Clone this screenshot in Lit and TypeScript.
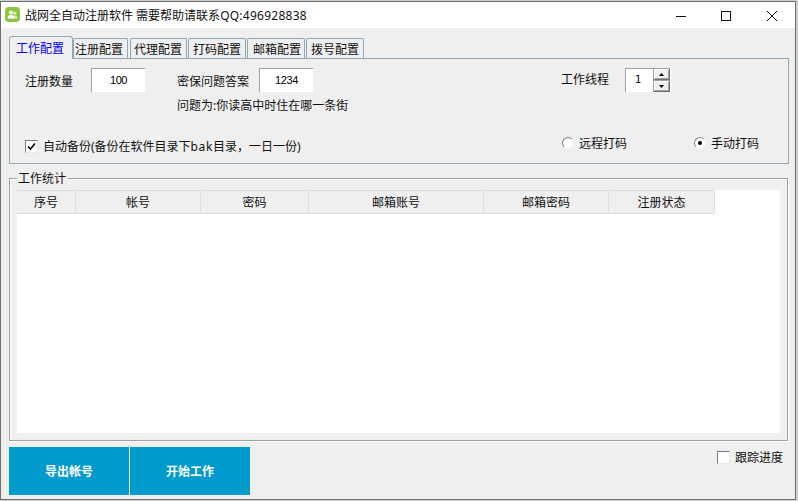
import { LitElement, html, css } from "lit";
import { customElement } from "lit/decorators.js";

@customElement("app-root")
export class AppRoot extends LitElement {
  static styles = css`
    :host { display: block; width: 798px; height: 501px; padding: 1px 2px 1px 0; box-sizing: border-box; background: #cfcfcf; font-family: "Noto Sans", "Noto Sans CJK SC", sans-serif; font-size: 12px; color: #111; }
    * { box-sizing: border-box; }
    .win { width: 796px; height: 499px; border: 1px solid #6e6e6e; background: #efefef; display: flex; flex-direction: column; }
    .title { height: 26px; background: #fff; display: flex; align-items: center; padding-left: 4px; flex: none; }
    .logo { width: 15px; height: 15px; margin-right: 5px; flex: none; margin-top: -1px; }
    .ttext { flex: 1; white-space: nowrap; margin-top: -1px; }
    .latin { letter-spacing: 0.25px; }
    .wbtns { display: flex; }
    .wbtn { width: 46px; height: 26px; padding-top: 2px; display: flex; align-items: center; justify-content: center; flex: none; }
    .wbtn.min { padding-left: 2px; }
    .body { flex: 1; padding: 8px 8px 4px 8px; display: flex; flex-direction: column; min-height: 0; }
    .tabs { display: flex; height: 22px; align-items: flex-end; position: relative; z-index: 1; flex: none; }
    .tab { height: 20px; border: 1px solid #8fa8b8; border-bottom: none; border-radius: 2px 2px 0 0; display: flex; align-items: center; white-space: nowrap; background: #efefef; flex: none; }
    .tab.on { height: 23px; color: #0000f0; margin-bottom: -1px; border-radius: 3px 3px 0 0; padding-bottom: 1px; }
    .panel { height: 106px; width: 780px; border: 1px solid #8fa8b8; padding: 9px 0 0 15px; flex: none; }
    .row1 { display: grid; grid-template-columns: 66px 86px 82px 302px 64px 1fr; align-items: center; height: 24px; }
    .drop { margin-top: 2px; }
    .lift { margin-top: -2px; }
    .q { margin: 0 0 0 152px; height: 26px; display: flex; align-items: center; }
    .row3 { display: grid; grid-template-columns: 537px 132px 1fr; margin-top: 13px; height: 20px; align-items: center; }
    .backup { margin-top: 6px; }
    .input { width: 54px; height: 24px; background: #fff; border-top: 1px solid #a0a0a0; border-left: 1px solid #a0a0a0; display: flex; align-items: center; justify-content: center; font-family: "Liberation Sans", sans-serif; font-size: 11px; letter-spacing: -0.4px; color: #000; padding-bottom: 2px; }
    .spin { display: flex; height: 24px; background: #fff; width: 46px; }
    .v { width: 28px; border-top: 1px solid #a0a0a0; border-left: 1px solid #a0a0a0; display: flex; align-items: center; justify-content: center; font-family: "DejaVu Sans Mono", monospace; font-size: 10px; color: #000; padding-bottom: 2px; padding-right: 3px; }
    .sb { width: 17px; display: flex; flex-direction: column; }
    .sbb { height: 12px; background: #efefef; border: 1px solid #a0a0a0; border-right-color: #707070; border-bottom-color: #707070; box-shadow: inset 1px 1px 0 #fff, inset -1px -1px 0 #a0a0a0; display: flex; align-items: center; justify-content: center; }
    .chk { display: flex; align-items: center; white-space: nowrap; }
    .box { width: 13px; height: 13px; flex: none; margin-right: 5px; background: #fff; border: 1px solid; border-color: #7a7a7a #e8e8e8 #e8e8e8 #7a7a7a; display: flex; align-items: center; justify-content: center; }
    .radio { width: 12px; height: 12px; flex: none; margin-right: 5px; border-radius: 50%; background: #fff; border: 1px solid; border-color: #808080 #f4f4f4 #f4f4f4 #808080; display: flex; align-items: center; justify-content: center; }
    .dot { width: 4px; height: 4px; background: #000; border-radius: 50%; }
    .bak { letter-spacing: 0.6px; }
    .group { margin-top: 14px; position: relative; height: 263px; width: 779px; border: 1px solid #a0a0a0; box-shadow: inset 1px 1px 0 #fff, 1px 1px 0 #fff; padding: 11px 7px 7px 7px; flex: none; }
    .legend { position: absolute; left: 7px; top: -9px; background: #efefef; padding: 0 2px 0 1px; height: 18px; line-height: 17px; }
    .table { height: 100%; background: #fff; }
    .thead { display: flex; height: 24px; width: 698px; }
    .th { background: #efefef; display: flex; align-items: center; justify-content: center; border: solid #dcdcdc; border-width: 1px 1px 1px 0; padding-bottom: 1px; }
    .foot { display: flex; margin-top: 6px; flex: none; }
    .btns { display: flex; gap: 1px; background: #fff; }
    .btn { height: 48px; width: 120px; background: #009acd; color: #fff; display: flex; align-items: center; justify-content: center; font-weight: 700; }
    .track { margin-left: auto; margin-right: 4px; align-self: flex-start; height: 20px; }
  `;

  render() {
    const tabs: [string, number, number, number][] = [
      ["工作配置", 64, 0, 6], ["注册配置", 55, 2, 1], ["代理配置", 57, 1, 3],
      ["打码配置", 58, 1, 4], ["邮箱配置", 58, 1, 5], ["拨号配置", 58, 0, 4],
    ];
    const cols: [string, number][] = [["序号", 59], ["帐号", 125], ["密码", 108], ["邮箱账号", 175], ["邮箱密码", 125], ["注册状态", 106]];
    return html`<div class="win">
      <div class="title">
        <svg class="logo" viewBox="0 0 15 15">
          <rect width="15" height="15" rx="4" fill="#8cc63f"/>
          <circle cx="9.800" cy="6.300" r="1.700" fill="#dcecc4"/><path d="M7.500 11.500c0-1.900 1-2.900 2.300-2.900s2.700 1 2.700 2.900z" fill="#dcecc4"/>
          <circle cx="6" cy="5.500" r="2.100" fill="#fff"/><path d="M2.500 11.500c0-2.400 1.500-3.400 3.500-3.400s3.300 1 3.300 3.400z" fill="#fff"/>
        </svg>
        <div class="ttext">战网全自动注册软件 需要帮助请联系<span class="latin">QQ:496928838</span></div>
        <div class="wbtns">
          <div class="wbtn min"><svg width="10" height="10" viewBox="0 0 10 10"><path d="M0 5.500h10" stroke="#111" fill="none"/></svg></div>
          <div class="wbtn"><svg width="10" height="10" viewBox="0 0 10 10"><rect x=".5" y=".5" width="9" height="9" stroke="#111" fill="none"/></svg></div>
          <div class="wbtn"><svg width="10" height="10" viewBox="0 0 10 10"><path d="M0 0l10 10M10 0L0 10" stroke="#111" fill="none"/></svg></div>
        </div>
      </div>
      <div class="body">
        <div class="tabs">
          ${tabs.map(([t, w, g, p], i) => html`<div class="tab ${i === 0 ? "on" : ""}" style="width:${w}px;margin-right:${g}px;padding-left:${p}px">${t}</div>`)}
        </div>
        <div class="panel">
          <div class="row1">
            <div class="drop">注册数量</div><div class="input">100</div>
            <div class="drop">密保问题答案</div><div class="input">1234</div>
            <div class="lift">工作线程</div>
            <div class="spin"><div class="v">1</div><div class="sb">
              <div class="sbb"><svg width="5" height="3" viewBox="0 0 5 3"><path d="M2.500 0L5 3H0z" fill="#000"/></svg></div>
              <div class="sbb"><svg width="5" height="3" viewBox="0 0 5 3"><path d="M0 0h5L2.500 3z" fill="#000"/></svg></div>
            </div></div>
          </div>
          <div class="q">问题为:你读高中时住在哪一条街</div>
          <div class="row3">
            <div class="chk backup"><div class="box"><svg width="9" height="9" viewBox="0 0 9 9"><path d="M1 4.500l2.500 2.500L8 1.500" stroke="#000" stroke-width="1.600" fill="none"/></svg></div>自动备份(备份在软件目录下<span class="bak">bak</span>目录，一日一份)</div>
            <div class="chk"><div class="radio"></div>远程打码</div>
            <div class="chk"><div class="radio"><div class="dot"></div></div>手动打码</div>
          </div>
        </div>
        <div class="group">
          <div class="legend">工作统计</div>
          <div class="table">
            <div class="thead">${cols.map(([t, w]) => html`<div class="th" style="width:${w}px">${t}</div>`)}</div>
          </div>
        </div>
        <div class="foot">
          <div class="btns"><div class="btn">导出帐号</div><div class="btn">开始工作</div></div>
          <div class="chk track"><div class="box"></div>跟踪进度</div>
        </div>
      </div>
    </div>`;
  }
}
